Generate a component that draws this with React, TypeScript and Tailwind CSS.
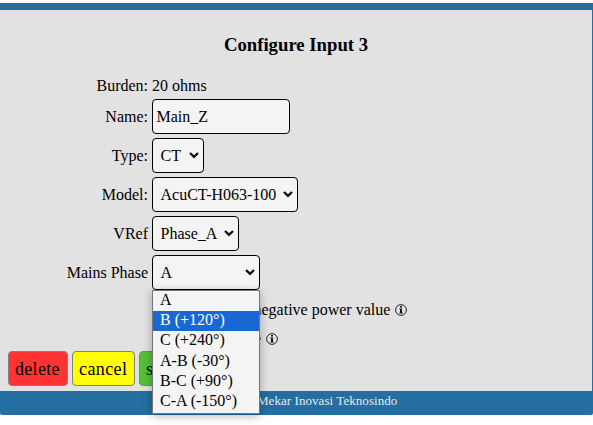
import React from "react";

function Chevron() {
  return (
    <svg width="10" height="8" viewBox="0 0 10 8" className="-mt-px shrink-0" fill="none" stroke="#101010" strokeWidth="2.3">
      <path d="M1 2 L5 5.8 L9 2" />
    </svg>
  );
}

function Info() {
  return (
    <svg width="12" height="12" viewBox="0 0 12 12" className="-mt-px shrink-0">
      <circle cx="6" cy="6" r="5.4" fill="none" stroke="#111" strokeWidth="0.9" />
      <path d="M5 2h2v1.6H5zM4.2 4.4h2.8v4.3h1v.9H4.2v-.9H5V5.3h-.8z" fill="#111" />
    </svg>
  );
}

function Row({ label, children }: { label: string; children: React.ReactNode }) {
  return (
    <div className="flex h-[35px] items-center">
      <div className="w-[148px] shrink-0 text-right">{label}</div>
      <div className="ml-1">{children}</div>
    </div>
  );
}

function Select({ value, width }: { value: string; width: string }) {
  return (
    <div className={`flex h-[35px] items-center justify-between rounded-[4px] border border-black bg-[#f4f4f4] pl-[7.5px] pr-[4px] ${width}`}>
      <span>{value}</span>
      <Chevron />
    </div>
  );
}

const options = ["A", "B (+120°)", "C (+240°)", "A-B (-30°)", "B-C (+90°)", "C-A (-150°)"];

export default function App() {
  return (
    <div className="h-[425px] w-[593px] overflow-hidden bg-white pt-[3px] font-['Liberation_Serif',serif] text-[16px] leading-[18px] text-black">
      <div className="flex h-[412px] flex-col rounded-b-[2px] border-r border-t-[7px] border-[#236fa1] bg-[#236fa1]">
        <main className="h-[381px] bg-[#e2e2e2]">
          <h3 className="pt-[24px] text-center text-[18.72px] font-bold leading-[21px]">Configure Input 3</h3>
          <div className="mt-[22px] flex h-[18px]">
            <div className="w-[148px] text-right">Burden:</div>
            <div className="ml-1">20 ohms</div>
          </div>
          <div className="mt-[4px] flex flex-col gap-1">
            <Row label="Name:">
              <div className="flex h-[35px] w-[138px] items-center rounded-[4px] border border-black bg-[#f4f4f4] pl-[3.5px]">Main_Z</div>
            </Row>
            <Row label="Type:"><Select value="CT" width="w-[52px]" /></Row>
            <Row label="Model:"><Select value="AcuCT-H063-100" width="w-[146px]" /></Row>
            <Row label="VRef"><Select value="Phase_A" width="w-[87px]" /></Row>
            <Row label="Mains Phase">
              <div className="relative">
                <Select value="A" width="w-[108px]" />
                <div className="absolute left-0 top-[35px] z-10 h-[124px] w-[108px] border border-[#767676] bg-[#f4f4f4] shadow-[0_2px_9px_rgba(0,0,0,0.3)]">
                  {options.map((o, i) => (
                    <div key={o} className={`h-[20.2px] pl-[7px] leading-[18px] ${i === 1 ? "bg-[#1967d2] text-white" : ""}`}>{o}</div>
                  ))}
                </div>
              </div>
            </Row>
          </div>
          <div className="mt-[11px] flex h-[18px] items-center gap-[5px] pl-[253.5px]">
            <span>negative power value</span><Info />
          </div>
          <div className="mt-[11px] flex h-[18px] items-center gap-[5px] pl-[254px]">
            <span>e</span><Info />
          </div>
          <div className="mt-[3px] flex gap-1 pl-2 text-[18px]">
            <div className="flex h-[35px] w-[60px] items-center rounded-[4px] border border-[#808080] bg-[#ff3333] pl-[6px] tracking-[0.3px]">delete</div>
            <div className="flex h-[35px] w-[63px] items-center rounded-[4px] border border-[#808080] bg-[#ffff00] pl-[6px] tracking-[0.4px]">cancel</div>
            <div className="flex h-[35px] w-[48px] items-center rounded-[4px] border border-[#808080] bg-[#55c135] pl-[6px]">save</div>
          </div>
        </main>
        <footer className="pl-[257px] pt-[2px] text-[13px] leading-[16px] tracking-[0.06px] text-[#e8e8e8]">Mekar Inovasi Teknosindo</footer>
      </div>
    </div>
  );
}
